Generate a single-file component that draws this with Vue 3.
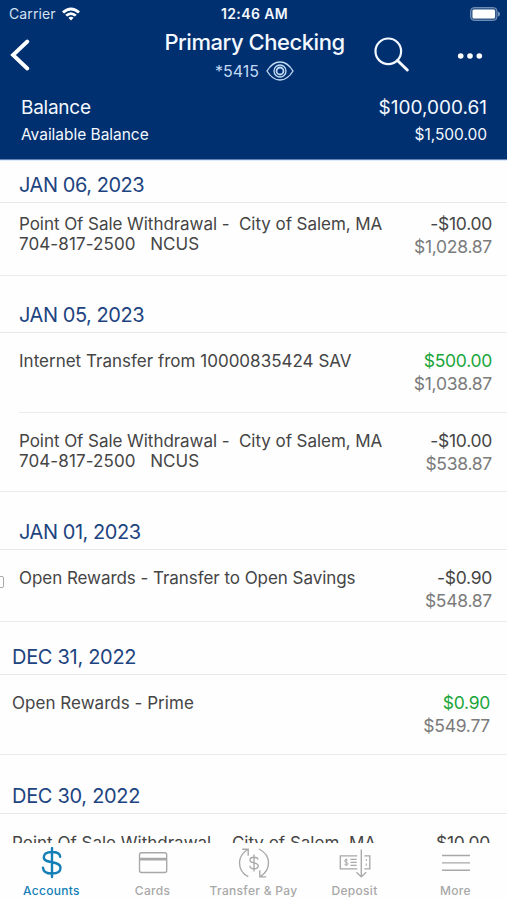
<script setup>
const groups = [
  { date: 'JAN 06, 2023', size: 'first', rows: [
    { lines: ['Point Of Sale Withdrawal -\u00a0 City of Salem, MA', '704-817-2500\u00a0\u00a0 NCUS'], amount: '-$10.00', balance: '$1,028.87', size: 'compact' },
  ] },
  { date: 'JAN 05, 2023', size: 'second', rows: [
    { lines: ['Internet Transfer from 10000835424 SAV'], amount: '$500.00', balance: '$1,038.87', credit: true, size: 'tall' },
    { lines: ['Point Of Sale Withdrawal -\u00a0 City of Salem, MA', '704-817-2500\u00a0\u00a0 NCUS'], amount: '-$10.00', balance: '$538.87', size: 'middle' },
  ] },
  { date: 'JAN 01, 2023', size: 'third', rows: [
    { lines: ['Open Rewards - Transfer to Open Savings'], amount: '-$0.90', balance: '$548.87', size: 'short', handle: true },
  ] },
  { date: 'DEC 31, 2022', size: 'fourth', shifted: true, rows: [
    { lines: ['Open Rewards - Prime'], amount: '$0.90', balance: '$549.77', credit: true, size: 'roomy' },
  ] },
  { date: 'DEC 30, 2022', size: 'fifth', shifted: true, rows: [
    { lines: ['Point Of Sale Withdrawal\u00a0 \u00a0\u00a0\u200aCity of Salem, MA'], amount: '-$10.00', balance: '', size: 'last' },
  ] },
]
const tabs = ['Accounts', 'Cards', 'Transfer & Pay', 'Deposit', 'More']
</script>

<template>
  <div class="phone">
    <header class="header">
      <div class="status">
        <div class="carrier">
          <span>Carrier</span>
          <svg class="wifi" viewBox="0 0 18 14">
            <path d="M0 4.5Q9-3.5 18 4.5L16 6.5Q9 .7 2 6.5Z M3.2 7.7Q9 2.7 14.8 7.7L12.8 9.6Q9 6.5 5.2 9.6Z M6.4 10.8Q9 8.7 11.6 10.8L9 13.4Z" />
          </svg>
        </div>
        <span class="clock">12:46 AM</span>
        <svg class="battery" viewBox="0 0 30 14">
          <rect x="0.6" y="0.6" width="26.4" height="12.8" rx="3.5" />
          <path class="tip" d="M28 4.5Q30 5 30 7T28 9.5Z" />
          <rect class="charge" x="2.5" y="2.5" width="22.5" height="9" rx="1.5" />
        </svg>
      </div>
      <div class="navbar">
        <svg class="back" viewBox="0 0 20 32"><path d="M17.3 2.5 3 16 17.3 29.5" /></svg>
        <div class="heading">
          <h1>Primary Checking</h1>
          <div class="number">
            <span>*5415</span>
            <svg class="eye" viewBox="0 0 28 20">
              <path d="M1 10Q6.4 1 14 1T27 10Q21.6 19 14 19T1 10Z" />
              <circle cx="14" cy="10" r="6" /><circle class="iris" cx="14" cy="10" r="3.5" />
            </svg>
          </div>
        </div>
        <svg class="search" viewBox="0 0 36 36">
          <circle cx="14.3" cy="14.3" r="12.8" /><path class="grip" d="M23.5 23.5 33.3 33" />
        </svg>
        <svg class="dots" viewBox="0 0 26 8">
          <circle cx="3.7" cy="4" r="2.8" /><circle cx="13" cy="4" r="2.8" /><circle cx="22.3" cy="4" r="2.8" />
        </svg>
      </div>
      <div class="balance"><span>Balance</span><span class="money">$100,000.61</span></div>
      <div class="available"><span>Available Balance</span><span class="money">$1,500.00</span></div>
    </header>

    <main class="list">
      <section v-for="g in groups" :key="g.date" :class="{ shifted: g.shifted }">
        <h2 class="date" :class="g.size">{{ g.date }}</h2>
        <div v-for="(r, i) in g.rows" :key="i" class="row" :class="r.size">
          <i v-if="r.handle" class="handle"></i>
          <div class="desc"><div v-for="l in r.lines" :key="l">{{ l }}</div></div>
          <div class="sums">
            <div class="amount" :class="{ credit: r.credit }">{{ r.amount }}</div>
            <div class="running">{{ r.balance }}</div>
          </div>
        </div>
      </section>
    </main>

    <nav class="tabs">
      <div v-for="(t, i) in tabs" :key="t" class="tab" :class="{ active: i === 0 }">
        <svg v-if="i === 0" class="icon dollar" viewBox="0 0 36 32">
          <path d="M18 1V30M26.2 9.8C26 6.8 23 5 18 5S9.8 7 9.8 10.3C9.8 17.5 26.5 13 26.5 20.7 26.5 24.5 23 26.5 18 26.5S9.3 24.5 9 20.8" />
        </svg>
        <svg v-else-if="i === 1" class="icon" viewBox="0 0 36 32">
          <rect x="4.5" y="5.7" width="27.2" height="19.8" rx="2" /><path d="M4.5 11.4H31.7M4.5 12.7H31.7" />
        </svg>
        <svg v-else-if="i === 2" class="icon" viewBox="0 0 36 32">
          <path d="M12.3 29.6C7 27 3.5 22 3.5 15.7 3.5 10.5 6 6.3 11.2 2.7M6.2 2.2H12.2V8.7M23 2C29 5 32.5 9.8 32.5 16 32.5 21.7 29.8 26 24.3 29.7M23.8 23.2V29.9H30.2" />
          <path d="M18 7.5V24.5M22 12.7C21.8 11 20.3 10.2 18 10.2S14 11.2 14 13C14 17 22.2 14.6 22.2 18.8 22.2 20.8 20.5 21.8 18 21.8S14 20.8 13.8 18.8" />
        </svg>
        <svg v-else-if="i === 3" class="icon" viewBox="0 0 36 32">
          <path d="M20.3 8.8H3.3V21.8H20.3M27.3 8.8H32.8V21.8H27.3M24.3 2.5V29.5M19.5 25.2 24.3 29.9 29.1 25.2M13.5 12.3H19.7M13.5 15.3H19.7M13.5 18.3H19.7" />
          <path class="fine" d="M10.7 13.2C10.3 12.5 7.6 12.1 7.6 13.8 7.6 15.7 11 14.8 11 16.9 11 18.5 8 18.4 7.4 17.2M9.2 11.5V19M29.3 12V14M29.3 16.5V18.8" />
        </svg>
        <svg v-else class="icon" viewBox="0 0 36 32"><path d="M4 8.5H32M4 15.9H32M4 23.2H32" /></svg>
        <span>{{ t }}</span>
      </div>
    </nav>
  </div>
</template>

<style>
body { margin: 0; background: #fff; }
</style>

<style scoped>
* { box-sizing: border-box; }
.phone { width: 507px; height: 900px; overflow: hidden; display: flex; flex-direction: column; font-family: Inter, "Liberation Sans", sans-serif; background: #fefefe; color: #454545; }
svg { display: block; fill: none; stroke: currentColor; flex: none; }
h1, h2 { margin: 0; font-weight: 400; }
.header { height: 160px; flex: none; background: #003070; border-bottom: 1px solid #6582b4; box-shadow: 0 1px 0 #dce8fb; color: #f4f8ff; position: relative; }
.status { height: 27px; display: grid; grid-template-columns: 1fr auto 1fr; align-items: center; padding: 0 7px 0 9px; font-size: 14px; }
.carrier { display: flex; align-items: center; gap: 6px; color: #d4e1f3; letter-spacing: .12px; }
.wifi { width: 18px; height: 14px; fill: #fff; stroke: none; }
.clock { font-weight: 600; font-size: 14px; letter-spacing: .4px; }
.battery { width: 30px; height: 14px; justify-self: end; fill: #315889; stroke: #7895bc; }
.battery .tip { fill: #7895bc; stroke: none; }
.battery .charge { fill: #fff; stroke: none; }
.navbar { height: 67px; padding-top: 1px; display: grid; grid-template-columns: 164px 181px 29px 36px 47px 26px; align-items: start; }
.back { width: 20px; height: 32px; margin: 11px 0 0 10px; stroke-width: 3.8; stroke-linecap: round; color: #fff; }
.heading { display: flex; flex-direction: column; align-items: center; white-space: nowrap; }
h1 { font-size: 22px; line-height: 28px; letter-spacing: -.46px; font-weight: 450; }
.number { display: flex; align-items: center; gap: 7px; height: 30px; font-size: 16px; color: #c3daf5; letter-spacing: -.05px; }
.eye { width: 28px; height: 20px; stroke-width: 1.35; }
.iris { stroke-width: 1.8; }
.search { grid-column: 4; width: 36px; height: 36px; margin-top: 9px; stroke-width: 2.2; stroke-linecap: round; }
.grip { stroke-width: 3; }
.dots { grid-column: 6; width: 26px; height: 8px; margin-top: 24px; fill: #fff; stroke: none; }
.balance, .available { display: flex; justify-content: space-between; padding: 0 20px 0 21px; }
.balance { height: 27px; line-height: 27px; font-size: 19px; letter-spacing: -.25px; }
.balance .money { letter-spacing: 0; }
.available { height: 27px; line-height: 27px; font-size: 15.5px; letter-spacing: -.03px; }
.list { height: 683px; flex: none; overflow: hidden; }
.date { display: flex; align-items: flex-end; padding: 0 19px 4px; border-bottom: 1px solid #e8e8e8; color: #1d4480; font-size: 20px; line-height: 26px; letter-spacing: -.45px; }
.first { height: 43px; }
.second { height: 57px; }
.third { height: 58px; }
.fourth { height: 53px; }
.fifth { height: 59px; }
.row { position: relative; display: flex; justify-content: space-between; padding: 18px 15px 0 19px; border-bottom: 1px solid #ececec; white-space: nowrap; }
.desc { font-size: 17px; line-height: 20px; letter-spacing: -.05px; }
.desc div + div { letter-spacing: .1px; }
.sums { text-align: right; font-size: 17.5px; line-height: 23px; margin-top: -2px; letter-spacing: -.27px; }
.credit { color: #19a53a; }
.running { color: #7b7b7b; }
.compact { height: 73px; padding-top: 11px; }
.tall { height: 80px; margin-left: 19px; padding-left: 0; }
.tall .desc { letter-spacing: .01px; }
.middle { height: 79px; }
.short { height: 72px; }
.roomy { height: 80px; }
.roomy .desc { letter-spacing: .03px; }
.last { height: 80px; padding-top: 19px; }
.last .desc { letter-spacing: 0; }
.handle { position: absolute; left: -5px; top: 26px; width: 9px; height: 12px; border: 1px solid #aaa; border-radius: 2px; }
.shifted .date { padding-left: 12px; letter-spacing: -.3px; }
.shifted .row { padding-left: 12px; padding-right: 17px; }
.tabs { height: 57px; flex: none; background: #fefefe; display: grid; grid-template-columns: repeat(5, 101px); padding-left: 1px; color: #a8a8a8; }
.tab { display: flex; flex-direction: column; align-items: center; padding-top: 4px; font-size: 12px; font-weight: 500; line-height: 16px; letter-spacing: .3px; white-space: nowrap; }
.icon { width: 36px; height: 32px; stroke-width: 1.35; margin-bottom: 4px; }
.dollar { stroke-width: 2.4; stroke-linecap: round; }
.fine { stroke-width: 1; }
.active { color: #147fb6; }
</style>
